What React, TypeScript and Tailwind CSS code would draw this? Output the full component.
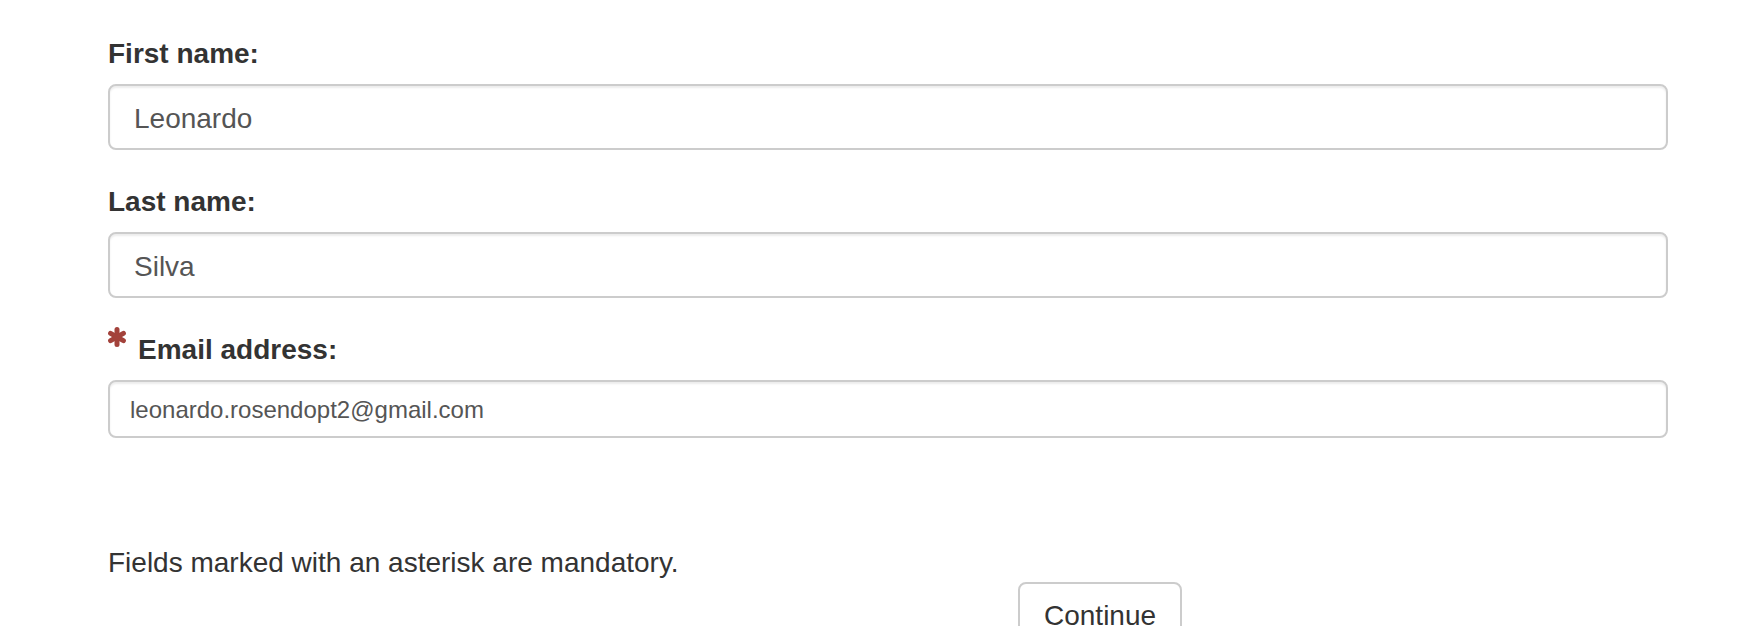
const Asterisk = () => (
  <svg viewBox="0 0 20 20" className="w-[20px] h-[20px] shrink-0" aria-hidden="true">
    <g stroke="#a3423b" strokeWidth="5" strokeLinecap="round">
      <line x1="10" y1="2.6" x2="10" y2="17.4" />
      <line x1="3.6" y1="6.3" x2="16.4" y2="13.7" />
      <line x1="3.6" y1="13.7" x2="16.4" y2="6.3" />
    </g>
  </svg>
);

const inputBase =
  "block w-full bg-white border-2 border-[#cccccc] rounded-[8px] text-[#555555] shadow-[inset_0_2px_2px_rgba(0,0,0,0.075)] outline-none";

export default function App() {
  return (
    <div
      className="w-full h-[626px] overflow-hidden bg-white pl-[108px] pr-[80px] pt-[34px] text-[#333333]"
      style={{ fontFamily: '"Liberation Sans", Arial, sans-serif' }}
    >
      <div className="mb-[32px]">
        <label className="block text-[28px] leading-[40px] font-bold mb-[10px]">First name:</label>
        <input className={`${inputBase} h-[66px] px-[24px] pt-[4px] text-[28px]`} defaultValue="Leonardo" readOnly />
      </div>

      <div className="mb-[32px]">
        <label className="block text-[28px] leading-[40px] font-bold mb-[10px]">Last name:</label>
        <input className={`${inputBase} h-[66px] px-[24px] pt-[4px] text-[28px]`} defaultValue="Silva" readOnly />
      </div>

      <div>
        <label className="flex items-start text-[28px] leading-[40px] font-bold mb-[10px]">
          <span className="mt-[-3px] mr-[11px] -ml-[1px]">
            <Asterisk />
          </span>
          Email address:
        </label>
        <input
          className={`${inputBase} h-[58px] px-[20px] pt-[2px] text-[24px]`}
          defaultValue="leonardo.rosendopt2@gmail.com"
          readOnly
        />
      </div>

      <p className="mt-[105px] text-[28px] leading-[40px]">Fields marked with an asterisk are mandatory.</p>

      <div className="-mt-[1px] pl-[910px]">
        <button className="bg-white border-2 border-[#cccccc] rounded-[8px] px-[24px] py-[12px] text-[28px] leading-[40px] text-[#333333]">
          Continue
        </button>
      </div>
    </div>
  );
}
